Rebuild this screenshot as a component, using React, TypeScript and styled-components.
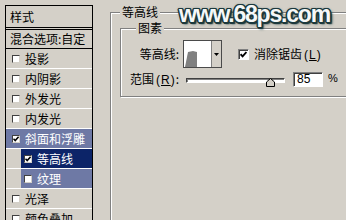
import React from "react";
import styled, { createGlobalStyle } from "styled-components";

const Global = createGlobalStyle`
  html, body { margin: 0; padding: 0; background: #d4d0c8; }
  body { font-family: "Noto Sans CJK SC", "Liberation Sans", sans-serif; font-size: 12px; color: #000; }
`;

const Page = styled.div`
  position: relative;
  width: 346px;
  height: 220px;
  overflow: hidden;
  display: flex;
  align-items: flex-start;
  background: #d4d0c8;
`;

const LeftPanel = styled.div`
  margin: 5px 0 0 5px;
  width: 88px;
  flex-shrink: 0;
  box-sizing: border-box;
  border: 1px solid #000;
  border-bottom: none;
  display: flex;
  flex-direction: column;
`;

const Header = styled.div`
  height: 21px;
  line-height: 21px;
  padding-left: 4px;
  border-bottom: 3px double #000;
`;

const Blend = styled.div`
  height: 18px;
  line-height: 18px;
  padding-left: 4px;
  border-bottom: 1px solid #000;
  white-space: nowrap;
`;

const Row = styled.div<{ $indent?: boolean }>`
  height: 19px;
  border-bottom: 1px solid #fff;
  display: flex;
  align-items: stretch;
  padding-left: ${(p) => (p.$indent ? "15px" : "0")};
`;

const RowInner = styled.div<{ $indent?: boolean; $tone?: "none" | "light" | "dark" }>`
  flex: 1;
  display: flex;
  align-items: center;
  gap: 5px;
  padding-left: ${(p) => (p.$indent ? "3px" : "6px")};
  white-space: nowrap;
  background: ${(p) =>
    p.$tone === "dark" ? "#0c2468" : p.$tone === "light" ? "#6e79a5" : "transparent"};
  color: ${(p) => (p.$tone === "dark" || p.$tone === "light" ? "#fff" : "#000")};
`;

const SmallBox = styled.span`
  width: 8px;
  height: 8px;
  box-sizing: border-box;
  flex-shrink: 0;
  background: #fff;
  border-top: 1px solid #404040;
  border-left: 1px solid #404040;
  border-right: 1px solid #d4d0c8;
  border-bottom: 1px solid #d4d0c8;
  display: flex;
  align-items: center;
  justify-content: center;
`;

const SmallCheck: React.FC<{ checked?: boolean }> = ({ checked }) => (
  <SmallBox>
    {checked && (
      <svg width="6" height="6" viewBox="0 0 6 6">
        <polyline points="0.5,2.8 2.2,4.6 5.6,0.8" fill="none" stroke="#000" strokeWidth="1.5" />
      </svg>
    )}
  </SmallBox>
);

const RightArea = styled.div`
  margin: 4px 0 0 17px;
  flex-shrink: 0;
`;

const Group = styled.fieldset<{ $w: number; $h?: number }>`
  margin: 0;
  padding: 0;
  min-width: 0;
  width: ${(p) => p.$w}px;
  ${(p) => (p.$h ? `height: ${p.$h}px;` : "")}
  box-sizing: border-box;
  border: 1px solid #808080;
  box-shadow: inset 1px 1px 0 #fff, 1px 1px 0 #fff;
`;

const Legend = styled.legend<{ $ml: number }>`
  margin-left: ${(p) => p.$ml}px;
  padding: 0 2px;
  line-height: 16px;
  background: #d4d0c8;
`;

const InnerWrap = styled.div`
  margin: 0 0 0 9px;
`;

const Form = styled.div`
  display: grid;
  grid-template-columns: 58px auto;
  column-gap: 4px;
  row-gap: 3px;
  align-items: center;
  padding: 4px 0 8px 0;
`;

const Label = styled.span`
  justify-self: end;
  white-space: nowrap;
  line-height: 16px;
`;

const Controls = styled.div`
  display: flex;
  align-items: center;
`;

const Picker = styled.div`
  width: 39px;
  height: 28px;
  box-sizing: border-box;
  border: 1px solid #4a4a4a;
  display: flex;
`;

const Preview = styled.div`
  width: 27px;
  background: #fff;
  border-right: 1px solid #808080;
  display: flex;
  align-items: flex-end;
`;

const DropBtn = styled.div`
  flex: 1;
  background: #d4d0c8;
  display: flex;
  align-items: center;
  justify-content: center;
`;

const BigBox = styled.span`
  width: 11px;
  height: 11px;
  box-sizing: border-box;
  margin-left: 16px;
  background: #fff;
  border-top: 1px solid #808080;
  border-left: 1px solid #808080;
  border-right: 1px solid #fff;
  border-bottom: 1px solid #fff;
  box-shadow: inset 1px 1px 0 #404040;
  display: flex;
  align-items: center;
  justify-content: center;
`;

const CheckText = styled.span`
  margin-left: 5px;
  white-space: nowrap;
  line-height: 16px;
`;

const Paren = styled.span`
  margin-left: 2px;
  letter-spacing: 1px;
  font-family: "Liberation Sans", sans-serif;
`;

const U = styled.span`
  text-decoration: underline;
`;

const Slider = styled.div`
  position: relative;
  width: 99px;
  height: 15px;
  margin-left: 3px;
`;

const Track = styled.div`
  margin-top: 6px;
  height: 5px;
  box-sizing: border-box;
  border: 1px solid #404040;
  border-right-color: #fff;
  border-bottom-color: #fff;
  box-shadow: inset 1px 1px 0 #808080;
  background: #fff;
`;

const Thumb = styled.div`
  position: absolute;
  top: 6px;
  width: 9px;
  height: 9px;
  margin-left: -4px;
  display: flex;
`;

const NumBox = styled.div`
  width: 30px;
  height: 15px;
  box-sizing: border-box;
  margin-left: 8px;
  background: #fff;
  border-top: 1px solid #808080;
  border-left: 1px solid #808080;
  border-right: 1px solid #fff;
  border-bottom: 1px solid #fff;
  box-shadow: inset 1px 1px 0 #404040;
  font-family: "Liberation Sans", sans-serif;
  font-size: 12px;
  line-height: 13px;
  padding-left: 3px;
`;

const Pct = styled.span`
  margin-left: 5px;
  font-family: "Liberation Sans", sans-serif;
  font-size: 11px;
  line-height: 13px;
  align-self: flex-start;
`;

const outline = "#1b383c";

const Watermark = styled.div`
  position: absolute;
  left: 179px;
  top: 1px;
  font-family: "Liberation Sans", sans-serif;
  font-weight: bold;
  font-size: 23px;
  letter-spacing: -1.2px;
  line-height: 26px;
  color: #f6f8f8;
  text-shadow: 1.5px 0 0 ${outline}, -1.5px 0 0 ${outline}, 0 1.5px 0 ${outline}, 0 -1.5px 0 ${outline},
    1px 1px 0 ${outline}, -1px -1px 0 ${outline}, 1px -1px 0 ${outline}, -1px 1px 0 ${outline},
    2px 2px 1px ${outline}, 0 0 3px #2c4d52, 2px 2px 3px #3a5a5e;
  white-space: nowrap;
`;

const items: { label: string; checked?: boolean; indent?: boolean; tone?: "none" | "light" | "dark" }[] = [
  { label: "投影" },
  { label: "内阴影" },
  { label: "外发光" },
  { label: "内发光" },
  { label: "斜面和浮雕", checked: true, tone: "light" },
  { label: "等高线", checked: true, indent: true, tone: "dark" },
  { label: "纹理", indent: true, tone: "light" },
  { label: "光泽" },
  { label: "颜色叠加" },
];

const range = 85;

export default function App() {
  return (
    <>
      <Global />
      <Page>
        <LeftPanel>
          <Header>样式</Header>
          <Blend>混合选项:自定</Blend>
          {items.map((it) => (
            <Row key={it.label} $indent={it.indent}>
              <RowInner $indent={it.indent} $tone={it.tone}>
                <SmallCheck checked={it.checked} />
                <span>{it.label}</span>
              </RowInner>
            </Row>
          ))}
        </LeftPanel>
        <RightArea>
          <Group $w={262} $h={240}>
            <Legend $ml={9}>等高线</Legend>
            <InnerWrap>
              <Group $w={240}>
                <Legend $ml={15}>图素</Legend>
                <Form>
                  <Label>等高线:</Label>
                  <Controls>
                    <Picker>
                      <Preview>
                        <svg width="27" height="26" viewBox="0 0 27 26">
                          <polygon points="1,26 4,11 9,10 13,11 13,26" fill="#808080" />
                        </svg>
                      </Preview>
                      <DropBtn>
                        <svg width="5" height="3" viewBox="0 0 5 3">
                          <polygon points="0,0 5,0 2.5,3" fill="#000" />
                        </svg>
                      </DropBtn>
                    </Picker>
                    <BigBox>
                      <svg width="7" height="7" viewBox="0 0 7 7">
                        <polyline points="0.6,3.2 2.6,5.4 6.4,1" fill="none" stroke="#000" strokeWidth="1.8" />
                      </svg>
                    </BigBox>
                    <CheckText>
                      消除锯齿<Paren>(<U>L</U>)</Paren>
                    </CheckText>
                  </Controls>
                  <Label>
                    范围<Paren>(<U>R</U>)</Paren>:
                  </Label>
                  <Controls>
                    <Slider>
                      <Track />
                      <Thumb style={{ left: `${range}%` }}>
                        <svg width="9" height="9" viewBox="0 0 9 9">
                          <polygon points="0.5,8.5 0.5,4 4.5,0.5 8.5,4 8.5,8.5" fill="#d4d0c8" stroke="#000" strokeWidth="1" />
                        </svg>
                      </Thumb>
                    </Slider>
                    <NumBox>{range}</NumBox>
                    <Pct>%</Pct>
                  </Controls>
                </Form>
              </Group>
            </InnerWrap>
          </Group>
        </RightArea>
        <Watermark>www.68ps.com</Watermark>
      </Page>
    </>
  );
}
